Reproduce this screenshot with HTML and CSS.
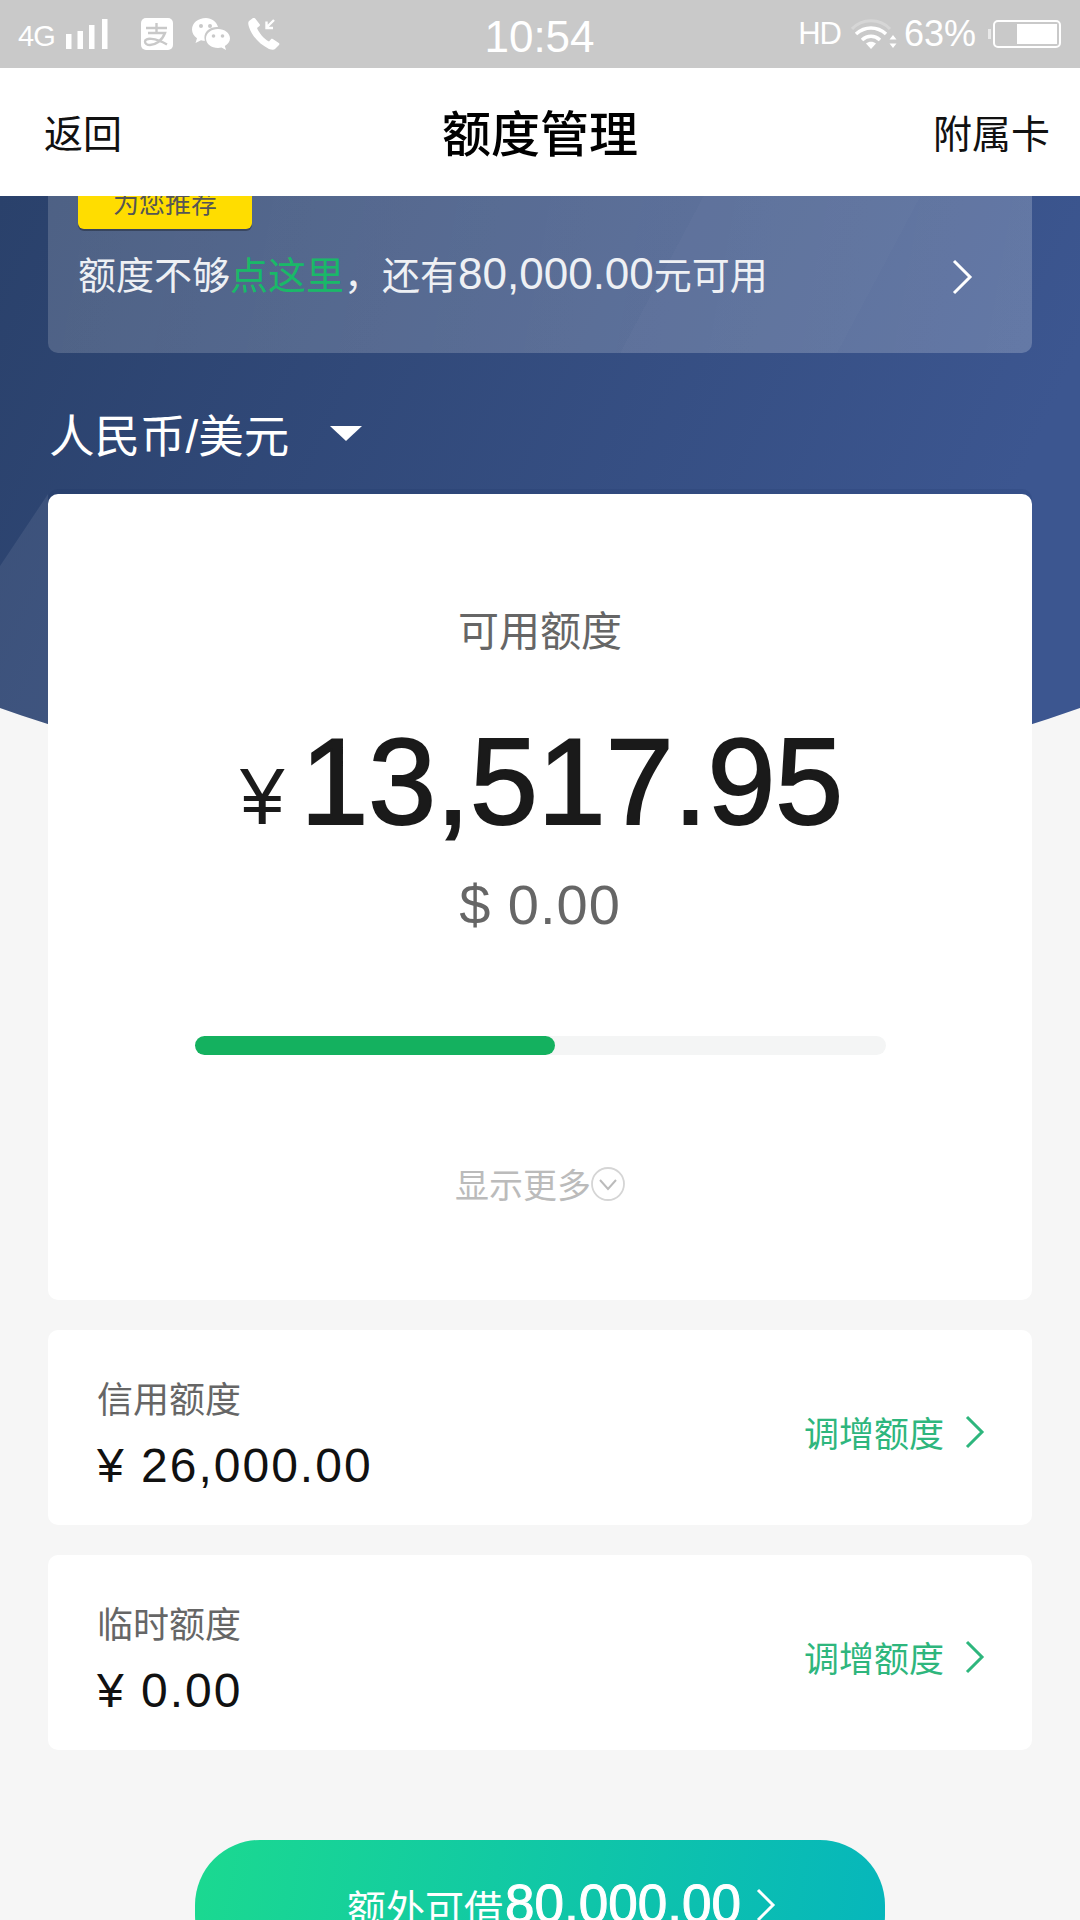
FILE: index.html
```html
<!DOCTYPE html>
<html lang="zh-CN">

<head>
  <meta charset="UTF-8" />
  <meta name="viewport" content="width=device-width, initial-scale=1" />
  <title>额度管理</title>
  <link rel="stylesheet" href="styles.css">
</head>

<body>
  <div class="status-bar">
    <div class="status-left">
      <span class="net">4G</span>
      <svg class="signal" width="42" height="30" viewBox="0 0 42 30"><path d="M0 15h5.500v15H0zM11.500 12H17v18h-5.500zM23 6h5.500v24H23zM36 0h5.500v30H36z" fill="#fff"/></svg>
      <svg class="app-icon" width="32" height="32" viewBox="0 0 32 32">
        <rect width="32" height="32" rx="5" fill="#fff"/>
        <path d="M5 10h21M15.500 5v9M7 15h17c-3 8-10 12-15 12-3 0-5-1.500-5-3.500 0-4 10-4 22 3" fill="none" stroke="#c9c9c9" stroke-width="2.400"/>
      </svg>
      <svg class="app-icon wechat" width="38" height="32" viewBox="0 0 38 32">
        <path d="M14 0C6 0 0 5 0 11.500c0 3.700 2 6.500 5 8.700L3.500 25l5.500-2.800c1.500.4 2.700.6 4 .6-.4-1.200-.6-2.300-.6-3.500C12.400 13 18.500 8.500 26 9 24.500 3.700 19.500 0 14 0z" fill="#fff"/>
        <path d="M26 11c-6.500 0-12 4-12 9.500S19.500 30 26 30c1.300 0 2.500-.2 3.500-.5L34 32l-1.200-4c3-1.800 5.200-4.300 5.200-7.500C38 15 32.500 11 26 11z" fill="#fff"/>
        <circle cx="9" cy="8" r="2" fill="#c9c9c9"/><circle cx="18" cy="8" r="2" fill="#c9c9c9"/>
        <circle cx="21.500" cy="18" r="1.800" fill="#c9c9c9"/><circle cx="30.500" cy="18" r="1.800" fill="#c9c9c9"/>
      </svg>
      <svg class="app-icon phone" width="32" height="32" viewBox="0 0 32 32">
        <path d="M5 0 1 3c-1 1-1 3 0 6 3 9 10 17 20 22 3 1 5 1 6 0l4-4c.6-.7.6-1.500-.2-2l-6-4c-.7-.4-1.300-.3-1.800.2l-2 2.300C16 21 11 15 9 10l2.500-2c.6-.5.6-1.200.2-1.800L7 .3C6.400-.2 5.600-.3 5 0z" fill="#fff"/>
        <path d="M26 2l-7 7M18.500 3.500V10H25" fill="none" stroke="#fff" stroke-width="2.400"/>
      </svg>
    </div>
    <div class="status-time">10:54</div>
    <div class="status-right">
      <span class="hd">HD</span>
      <svg class="wifi" width="46" height="32" viewBox="0 0 46 32">
        <path d="M1 11C11 0 29 0 39 11" fill="none" stroke="#fff" stroke-opacity=".25" stroke-width="3"/>
        <path d="M5 16c9-8 21-8 30 0M11 22c5.500-5 12.500-5 18 0" fill="none" stroke="#fff" stroke-width="3.600"/>
        <path d="M15 25.500c3-2.500 7-2.500 10 0L20 31z" fill="#fff"/>
        <path d="M42 17l3.500 4.500h-7zM42 30l-3.500-4.500h7z" fill="#fff"/>
      </svg>
      <span class="pct">63%</span>
      <div class="battery">
        <span class="battery-cap"></span>
        <div class="battery-body"><span class="battery-fill"></span></div>
      </div>
    </div>
  </div>

  <header class="nav">
    <span class="nav-side">返回</span>
    <h1 class="nav-title">额度管理</h1>
    <span class="nav-side">附属卡</span>
  </header>

  <main class="content">
    <!-- hero background sits behind the cards -->
    <svg class="hero" width="1080" height="540" viewBox="0 0 1080 540">
      <defs>
        <linearGradient id="heroGrad" x1="0" y1="0" x2="1" y2="0.25">
          <stop offset="0" stop-color="#2a416b"/>
          <stop offset="1" stop-color="#3c5690"/>
        </linearGradient>
      </defs>
      <path d="M0 0H1080V512C720 639 360 639 0 512Z" fill="url(#heroGrad)"/>
      <path d="M0 370L48 298V529L0 512Z" fill="#fff" fill-opacity=".08"/>
    </svg>

    <section class="promo">
      <div class="promo-tag">为您推荐</div>
      <div class="promo-row">
        <p class="promo-text">额度不够<span class="green">点这里</span>，还有<span class="promo-num">80,000.00</span>元可用</p>
        <svg class="chev" width="22" height="36" viewBox="0 0 22 36"><path d="M3 2l16 16L3 34" fill="none" stroke="#fff" stroke-width="3"/></svg>
      </div>
    </section>

    <div class="currency">
      <span>人民币/美元</span>
      <span class="caret"></span>
    </div>

    <section class="card main-card">
      <div class="avail-label">可用额度</div>
      <div class="avail-amount"><span class="yen">¥</span>13,517.95</div>
      <div class="avail-usd">$ 0.00</div>
      <div class="progress"><div class="progress-fill"></div></div>
      <div class="more">
        <span>显示更多</span>
        <svg width="34" height="34" viewBox="0 0 34 34"><circle cx="17" cy="17" r="16" fill="none" stroke="#d5d5d5" stroke-width="1.800"/><path d="M9 13l8 9 8-9" fill="none" stroke="#bbb" stroke-width="2"/></svg>
      </div>
    </section>

    <section class="card limit-card">
      <div class="limit-info">
        <div class="limit-label">信用额度</div>
        <div class="limit-amount">¥ 26,000.00</div>
      </div>
      <div class="limit-link">
        <span>调增额度</span>
        <svg width="22" height="34" viewBox="0 0 22 34"><path d="M3 2l15 15L3 32" fill="none" stroke="#2eb67d" stroke-width="3"/></svg>
      </div>
    </section>

    <section class="card limit-card">
      <div class="limit-info">
        <div class="limit-label">临时额度</div>
        <div class="limit-amount">¥ 0.00</div>
      </div>
      <div class="limit-link">
        <span>调增额度</span>
        <svg width="22" height="34" viewBox="0 0 22 34"><path d="M3 2l15 15L3 32" fill="none" stroke="#2eb67d" stroke-width="3"/></svg>
      </div>
    </section>

    <button class="borrow-btn">
      <span class="borrow-text">额外可借</span><span class="borrow-num">80,000.00</span>
      <svg width="22" height="34" viewBox="0 0 22 34"><path d="M3 2l15 15L3 32" fill="none" stroke="#fff" stroke-width="3"/></svg>
    </button>
  </main>
</body>

</html>
```

FILE: styles.css
```css
/* Reset and base styles */
* {
  box-sizing: border-box;
}

html,
body {
  height: 1920px;
  overflow: hidden;
}

body {
  margin: 0;
  background: #f6f6f6;
  color: #111;
  font-family: "Liberation Sans", "Noto Sans CJK SC", sans-serif;
}

/* Status bar */
.status-bar {
  height: 68px;
  background: #c9c9c9;
  color: #fff;
  display: grid;
  grid-template-columns: 1fr auto 1fr;
  align-items: center;
  padding: 0 19px 0 18px;
}

.status-left,
.status-right {
  display: flex;
  align-items: center;
}

.status-right {
  justify-content: flex-end;
}

.net {
  font-size: 29px;
  width: 37px;
  letter-spacing: -1px;
  margin-top: 4px;
}

.signal {
  margin-left: 11px;
}

.app-icon {
  margin-left: 33px;
}

.wechat {
  margin-left: 19px;
}

.phone {
  margin-left: 18px;
}

.status-time {
  font-size: 44px;
  margin-top: 6px;
}

.hd {
  font-size: 31px;
  letter-spacing: -1px;
}

.wifi {
  margin-left: 10px;
}

.pct {
  font-size: 36px;
  margin-left: 7px;
}

.battery {
  display: flex;
  align-items: center;
  margin-left: 12px;
}

.battery-cap {
  width: 3px;
  height: 10px;
  background: #fff;
  opacity: .6;
}

.battery-body {
  width: 68px;
  height: 28px;
  margin-left: 2px;
  border: 2px solid #fff;
  border-radius: 5px;
  padding: 2px;
  display: flex;
  justify-content: flex-end;
}

.battery-fill {
  width: 40px;
  background: #fff;
}

/* Nav */
.nav {
  height: 128px;
  background: #fff;
  display: flex;
  align-items: center;
  justify-content: space-between;
  padding: 0 30px 3px 44px;
  position: relative;
  z-index: 2;
}

.nav-side {
  font-size: 39px;
  color: #111;
}

.nav-title {
  margin: 0;
  font-size: 49px;
  font-weight: 500;
  color: #000;
  position: absolute;
  left: 442px;
}

/* Content */
.content {
  position: relative;
  height: 1724px;
  overflow: hidden;
  padding: 0 48px;
}

.hero {
  position: absolute;
  top: 0;
  left: 0;
}

.promo {
  position: relative;
  margin-top: -30px;
  height: 187px;
  padding: 0 30px;
  border-radius: 10px;
  background:
    linear-gradient(118deg, transparent 62%, rgba(255, 255, 255, .015) 62%, rgba(255, 255, 255, .015) 82%, transparent 82%),
    linear-gradient(100deg, rgba(255, 255, 255, .17), rgba(255, 255, 255, .21));
}

.promo-tag {
  width: 174px;
  height: 63px;
  padding-top: 20px;
  background: #ffdd00;
  border-radius: 0 0 6px 6px;
  box-shadow: 0 2px 0 rgba(0, 0, 0, .3);
  color: #555;
  font-size: 26px;
  text-align: center;
  line-height: 36px;
}

.promo-row {
  display: flex;
  align-items: center;
  justify-content: space-between;
  margin-top: 21px;
  padding-right: 29px;
}

.promo-text {
  margin: 0;
  color: #eef0f4;
  font-size: 38px;
  line-height: 48px;
}

.promo-num {
  font-size: 44px;
}

.green {
  color: #19b968;
}

.chev {
  flex: none;
  margin-top: 3px;
}

.currency {
  position: relative;
  display: flex;
  align-items: center;
  gap: 41px;
  height: 141px;
  padding: 19px 0 0 1px;
  color: #fff;
  font-size: 45.500px;
}

.caret {
  width: 0;
  height: 0;
  border-left: 16px solid transparent;
  border-right: 16px solid transparent;
  border-top: 15px solid #fff;
}

.card {
  position: relative;
  background: #fff;
  border-radius: 10px;
}

.main-card {
  height: 806px;
  padding-top: 112px;
  display: flex;
  flex-direction: column;
  align-items: center;
  box-shadow: 0 -5px 0 rgba(20, 40, 90, .12);
}

.avail-label {
  font-size: 41px;
  line-height: 52px;
  color: #666;
}

.avail-amount {
  margin-top: 54px;
  font-size: 122px;
  line-height: 140px;
  color: #1a1a1a;
  -webkit-text-stroke: 2px #1a1a1a;
  display: flex;
  align-items: baseline;
  padding-left: 3px;
}

.yen {
  font-size: 80px;
  margin-right: 16px;
  -webkit-text-stroke: 0;
}

.avail-usd {
  margin-top: 3px;
  font-size: 56px;
  line-height: 70px;
  color: #666;
  letter-spacing: 1px;
}

.progress {
  margin-top: 96px;
  width: 691px;
  height: 19px;
  border-radius: 10px;
  background: #f4f5f5;
}

.progress-fill {
  width: 360px;
  height: 100%;
  border-radius: 10px;
  background: #14b15f;
}

.more {
  margin-top: 104px;
  display: flex;
  align-items: center;
  color: #bbb;
  font-size: 34px;
}

.limit-card {
  height: 195px;
  margin-top: 30px;
  padding: 0 46px 0 49px;
  display: flex;
  align-items: center;
  justify-content: space-between;
}

.limit-info {
  padding-top: 16px;
}

.limit-label {
  font-size: 36px;
  line-height: 46px;
  color: #666;
}

.limit-amount {
  margin-top: 14px;
  font-size: 48px;
  line-height: 56px;
  letter-spacing: 2px;
  color: #111;
}

.limit-link {
  display: flex;
  align-items: center;
  gap: 20px;
  padding-top: 8px;
  color: #2eb67d;
  font-size: 35px;
}

.borrow-btn {
  display: flex;
  align-items: flex-start;
  justify-content: center;
  width: 690px;
  height: 140px;
  margin: 90px auto 0;
  padding: 34px 0 0 44px;
  border: 0;
  border-radius: 65px;
  background: linear-gradient(100deg, #1bd990, #06b6bc);
  color: #fff;
  font-family: inherit;
}

.borrow-text {
  font-size: 39px;
  line-height: 60px;
  margin-top: 6px;
}

.borrow-num {
  font-size: 53px;
  line-height: 60px;
  -webkit-text-stroke: 1px #fff;
  margin-left: 2px;
}

.borrow-btn svg {
  margin: 14px 0 0 14px;
}
```
